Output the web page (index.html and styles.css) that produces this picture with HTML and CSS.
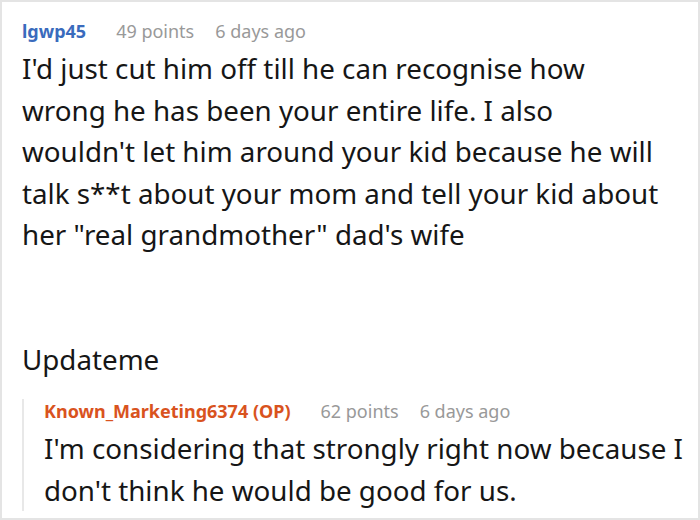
FILE: index.html
```html
<!DOCTYPE html>
<html>
<head>
<meta charset="utf-8">
<link rel="stylesheet" href="styles.css">
</head>
<body>
<div class="frame">
  <div class="comment">
    <div class="meta">
      <span class="user">lgwp45</span>
      <span class="info">49 points</span>
      <span class="info">6 days ago</span>
    </div>
    <div class="text">I'd just cut him off till he can recognise how wrong he has been your entire life. I also wouldn't let him around your kid because he will talk s**t about your mom and tell your kid about her "real grandmother" dad's wife</div>
    <div class="text update">Updateme</div>
    <div class="reply">
      <div class="meta">
        <span class="user op">Known_Marketing6374 (OP)</span>
        <span class="info">62 points</span>
        <span class="info">6 days ago</span>
      </div>
      <div class="text">I'm considering that strongly right now because I don't think he would be good for us.</div>
    </div>
  </div>
</div>
</body>
</html>
```
FILE: styles.css
```css
html, body {
  margin: 0;
  padding: 0;
  background: #fff;
}
.frame {
  width: 700px;
  height: 520px;
  box-sizing: border-box;
  border: 2px solid #e4e4e4;
  overflow: hidden;
  font-family: "Noto Sans", sans-serif;
  color: #161616;
}
.comment {
  padding: 17px 30px 0 20px;
}
.meta {
  display: flex;
  gap: 21px;
  font-size: 18px;
  line-height: 24px;
}
.user {
  font-weight: bold;
  color: #3a6bbd;
  margin-right: 9px;
}
.user.op {
  color: #d9531e;
}
.info {
  color: #999;
}
.text {
  font-size: 27.75px;
  line-height: 41.5px;
  margin-top: 5px;
}
.update {
  margin-top: 83.5px;
}
.reply {
  margin-top: 29.5px;
  margin-right: -16px;
  border-left: 2px solid #e8e8e8;
  padding-left: 20px;
}
.reply .meta {
  margin-top: -11px;
}
.reply .text {
  margin-bottom: -9px;
}
```
